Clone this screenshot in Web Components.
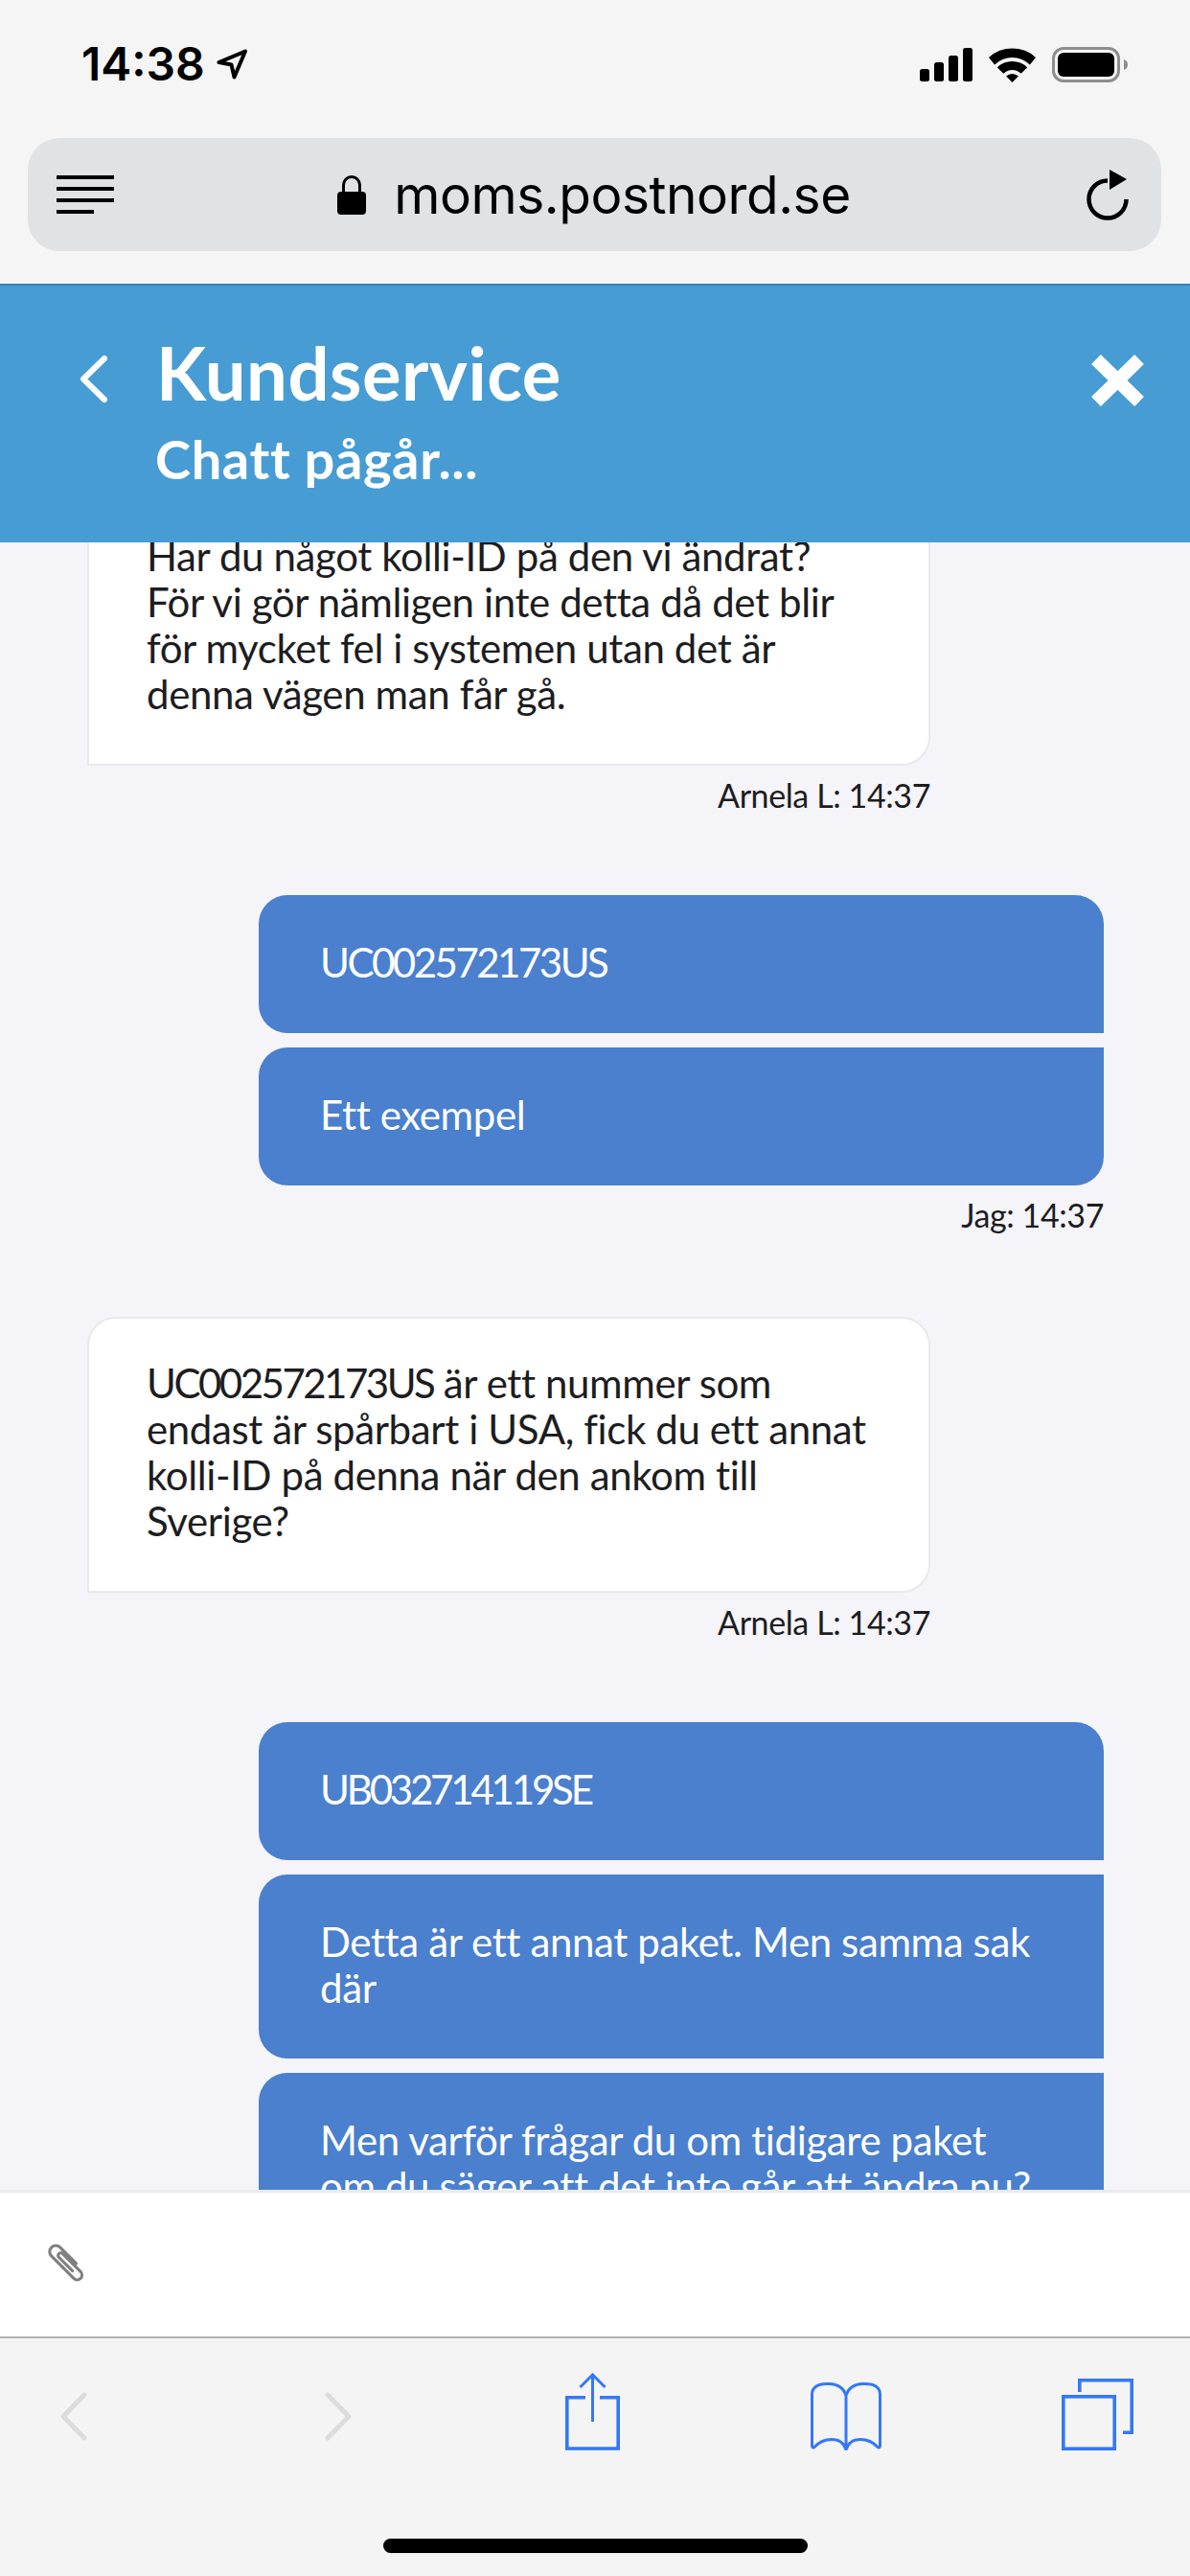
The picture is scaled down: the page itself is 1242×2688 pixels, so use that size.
<!DOCTYPE html>
<html lang="sv">
<head>
<meta charset="utf-8">
<title>Kundservice</title>
<style>
  html, body { margin: 0; padding: 0; }
  body {
    display: flex;
    flex-direction: column;
    width: 1242px;
    height: 2688px;
    overflow: hidden;
    background: #f4f4f9;
    font-family: Lato, "Open Sans", sans-serif;
  }
  .id { letter-spacing: -2.5px; }
  .id.narrow { letter-spacing: -3.2px; }
</style>
</head>
<body>
  <status-bar time="14:38"></status-bar>
  <url-bar host="moms.postnord.se"></url-bar>
  <chat-header title="Kundservice" status="Chatt pågår..."></chat-header>
  <chat-log>
    <chat-bubble from="agent" shift>Har du något kolli-ID på den vi ändrat? För vi gör nämligen inte detta då det blir för mycket fel i systemen utan det är denna vägen man får gå.</chat-bubble>
    <chat-time from="agent">Arnela L: 14:37</chat-time>
    <chat-bubble from="me" corner="first"><span class="id">UC002572173US</span></chat-bubble>
    <chat-bubble from="me" corner="last">Ett exempel</chat-bubble>
    <chat-time from="me">Jag: 14:37</chat-time>
    <chat-bubble from="agent"><span class="id">UC002572173US</span> är ett nummer som endast är spårbart i USA, fick du ett annat kolli-ID på denna när den ankom till Sverige?</chat-bubble>
    <chat-time from="agent">Arnela L: 14:37</chat-time>
    <chat-bubble from="me" corner="first"><span class="id narrow">UB032714119SE</span></chat-bubble>
    <chat-bubble from="me" corner="middle">Detta är ett annat paket. Men samma sak där</chat-bubble>
    <chat-bubble from="me" corner="last">Men varför frågar du om tidigare paket om du säger att det inte går att ändra nu?</chat-bubble>
  </chat-log>
  <chat-composer></chat-composer>
  <browser-toolbar></browser-toolbar>

<script>
class StatusBar extends HTMLElement {
  constructor() {
    super();
    this.shadow = this.attachShadow({ mode: 'open' });
  }

  connectedCallback() {
    this.shadow.innerHTML = `
      <style>
        :host {
          display: flex;
          flex: none;
          align-items: flex-start;
          justify-content: space-between;
          height: 144px;
          box-sizing: border-box;
          padding: 49px 65px 0 85px;
          background: #f5f5f5;
          color: #000;
        }
        .left { display: flex; align-items: center; gap: 12px; height: 36px; }
        .time { font: 600 48px/36px Inter, sans-serif; }
        .right { display: flex; align-items: center; height: 37px; }
        svg { display: block; }
        .signal { margin-right: 17px; }
        .wifi { margin-right: 17px; }
      </style>
      <div class="left">
        <span class="time">${this.getAttribute('time')}</span>
        <svg width="32" height="32" viewBox="0 0 32 32" fill="none" stroke="#000" stroke-width="4" stroke-linejoin="round">
          <path d="M2.5 14 L30 2.5 L18.5 29.5 L15.5 16.5 Z"/>
        </svg>
      </div>
      <div class="right">
        <svg class="signal" width="55" height="35" viewBox="0 0 55 35" fill="#000">
          <rect x="0" y="22" width="10" height="13" rx="2.5"/>
          <rect x="15" y="15" width="10" height="20" rx="2.5"/>
          <rect x="30" y="8" width="10" height="27" rx="2.5"/>
          <rect x="45" y="0" width="10" height="35" rx="2.5"/>
        </svg>
        <svg class="wifi" width="49" height="36" viewBox="0 0 49 36" fill="#000">
          <path d="M0 10 A36 36 0 0 1 49 10 L42.9 17.6 A26 26 0 0 0 6.1 17.6 Z"/>
          <path d="M8.9 20.4 A22 22 0 0 1 40.1 20.4 L33.7 26.8 A13 13 0 0 0 15.3 26.8 Z"/>
          <path d="M18.1 29.6 A9 9 0 0 1 30.9 29.6 L24.5 36 Z"/>
        </svg>
        <svg width="79" height="37" viewBox="0 0 79 37">
          <rect x="1.5" y="1.5" width="68" height="34" rx="10.5" fill="none" stroke="#8e8e8e" stroke-width="3"/>
          <rect x="6" y="6" width="59" height="25" rx="6" fill="#000"/>
          <path d="M75 13 C78 14 79 16 79 18.5 C79 21 78 23 75 24 Z" fill="#8e8e8e"/>
        </svg>
      </div>
    `;
  }
}

class UrlBar extends HTMLElement {
  constructor() {
    super();
    this.shadow = this.attachShadow({ mode: 'open' });
  }

  connectedCallback() {
    this.shadow.innerHTML = `
      <style>
        :host {
          display: block;
          flex: none;
          height: 152px;
          box-sizing: border-box;
          padding: 0 30px 0 29px;
          background: #f5f5f5;
        }
        .pill {
          display: flex;
          align-items: center;
          height: 118px;
          box-sizing: border-box;
          padding: 0 32px 0 30px;
          border-radius: 33px;
          background: #e1e2e4;
          color: #000;
        }
        .menu { display: block; }
        .site {
          flex: 1;
          display: flex;
          align-items: center;
          justify-content: center;
          gap: 29px;
          padding-right: 13px;
          font: 400 55px/60px Inter, sans-serif;
          letter-spacing: -0.45px;
        }
        svg { display: block; flex: none; }
      </style>
      <div class="pill">
        <svg class="menu" width="60" height="40" viewBox="0 0 60 40" fill="#000">
          <rect y="0" width="60" height="4"/>
          <rect y="12" width="60" height="4"/>
          <rect y="24" width="60" height="4"/>
          <rect y="36" width="39" height="4"/>
        </svg>
        <div class="site">
          <svg width="30" height="41" viewBox="0 0 30 41">
            <path d="M6.5 19 V10 A8.5 8.5 0 0 1 23.5 10 V19" fill="none" stroke="#000" stroke-width="3"/>
            <rect x="0" y="17" width="30" height="24" rx="4" fill="#000"/>
          </svg>
          <span>${this.getAttribute('host')}</span>
        </div>
        <svg width="46" height="54" viewBox="0 0 46 54">
          <path d="M22 12.5 A19.5 19.5 0 1 0 41.5 32" fill="none" stroke="#000" stroke-width="4.5"/>
          <path d="M24 1 L42 11 L24 22 Z" fill="#000"/>
        </svg>
      </div>
    `;
  }
}

class ChatHeader extends HTMLElement {
  constructor() {
    super();
    this.shadow = this.attachShadow({ mode: 'open' });
  }

  connectedCallback() {
    this.shadow.innerHTML = `
      <style>
        :host {
          display: flex;
          flex: none;
          align-items: flex-start;
          position: relative;
          z-index: 1;
          height: 270px;
          box-sizing: border-box;
          padding: 48px 48px 0 83px;
          border-top: 2px solid #3b7fae;
          background: #479cd4;
          color: #fff;
        }
        .back { display: block; flex: none; margin: 25px 53px 0 0; }
        .titles { flex: 1; font-family: Lato, sans-serif; font-weight: 700; }
        h1 { margin: 0 0 0 -2px; font: inherit; font-size: 76px; line-height: 86px; letter-spacing: 0.5px; }
        p { margin: 15px 0 0 -3px; font: inherit; font-size: 56px; line-height: 64px; letter-spacing: 0.6px; }
        .close { display: block; flex: none; margin-top: 24px; }
      </style>
      <svg class="back" width="29" height="49" viewBox="0 0 29 49" fill="none" stroke="#fff" stroke-width="6" stroke-linecap="round" stroke-linejoin="round">
        <path d="M26 3 L4 24.5 L26 46"/>
      </svg>
      <div class="titles">
        <h1>${this.getAttribute('title')}</h1>
        <p>${this.getAttribute('status')}</p>
      </div>
      <svg class="close" width="55" height="54" viewBox="0 0 55 54" fill="none" stroke="#fff" stroke-width="14">
        <path d="M5 5 L50 49 M50 5 L5 49"/>
      </svg>
    `;
  }
}

class ChatLog extends HTMLElement {
  constructor() {
    super();
    this.shadow = this.attachShadow({ mode: 'open' });
  }

  connectedCallback() {
    this.shadow.innerHTML = `
      <style>
        :host {
          display: block;
          flex: 1;
          min-height: 0;
          overflow: hidden;
          background: #f4f4f9;
        }
        .scroll {
          display: flex;
          flex-direction: column;
          padding: 0 90px 0 91px;
        }
      </style>
      <div class="scroll"><slot></slot></div>
    `;
  }
}

class ChatBubble extends HTMLElement {
  constructor() {
    super();
    this.shadow = this.attachShadow({ mode: 'open' });
  }

  connectedCallback() {
    const radius = 30;
    const corners = {
      first: `${radius}px ${radius}px 0 ${radius}px`,
      middle: `${radius}px 0 0 ${radius}px`,
      last: `${radius}px 0 ${radius}px ${radius}px`,
    };
    const mine = this.getAttribute('from') === 'me';
    this.shadow.innerHTML = `
      <style>
        :host {
          display: block;
          flex: none;
          box-sizing: border-box;
          width: ${mine ? 882 : 880}px;
          margin: ${this.hasAttribute('shift') ? '-55px 0 0' : '0'};
          align-self: ${mine ? 'flex-end' : 'flex-start'};
          padding: ${mine ? '46px 64px 50px' : '43px 60px 49px'};
          font: 400 42px/48px Lato, sans-serif;
          letter-spacing: -0.38px;
          ${mine
            ? `background: #4a80ce; color: #fff; border-radius: ${corners[this.getAttribute('corner')]};`
            : `background: #fff; color: #1d1d1f; border: 2px solid #e9e9ec; border-radius: ${radius}px ${radius}px ${radius}px 0;`}
        }
        :host([corner="first"]), :host([corner="middle"]) { margin-bottom: 15px; }
      </style>
      <slot></slot>
    `;
  }
}

class ChatTime extends HTMLElement {
  constructor() {
    super();
    this.shadow = this.attachShadow({ mode: 'open' });
  }

  connectedCallback() {
    const mine = this.getAttribute('from') === 'me';
    this.shadow.innerHTML = `
      <style>
        :host {
          display: block;
          flex: none;
          box-sizing: border-box;
          height: ${mine ? 137 : 135}px;
          width: ${mine ? 'auto' : '880px'};
          padding-top: 11px;
          text-align: right;
          font: 400 34px/40px Lato, sans-serif;
          letter-spacing: -0.4px;
          color: #1d1d1f;
        }
      </style>
      <slot></slot>
    `;
  }
}

class ChatComposer extends HTMLElement {
  constructor() {
    super();
    this.shadow = this.attachShadow({ mode: 'open' });
  }

  connectedCallback() {
    this.shadow.innerHTML = `
      <style>
        :host {
          display: flex;
          flex: none;
          align-items: center;
          position: relative;
          height: 155px;
          box-sizing: border-box;
          padding: 0 0 0 47px;
          border-top: 3px solid #ebebeb;
          border-bottom: 2px solid #b2b2b2;
          background: #fff;
        }
        svg { display: block; }
      </style>
      <svg width="49" height="51" viewBox="-2 -11 46 48" fill="none" stroke="#808080" stroke-width="3.4" stroke-linecap="round">
        <path transform="rotate(-45) scale(.86)" d="M14 33 V7 A7 7 0 0 0 0 7 V43 A5.5 5.5 0 0 0 11 43 V14 A3 3 0 0 0 5 14 V36"/>
      </svg>
    `;
  }
}

class BrowserToolbar extends HTMLElement {
  constructor() {
    super();
    this.shadow = this.attachShadow({ mode: 'open' });
  }

  connectedCallback() {
    this.shadow.innerHTML = `
      <style>
        :host {
          display: flex;
          flex: none;
          flex-direction: column;
          align-items: center;
          height: 248px;
          background: #f4f4f4;
        }
        .icons {
          display: flex;
          align-items: flex-start;
          align-self: stretch;
          height: 209px;
          box-sizing: border-box;
          padding: 36px 0 0 63px;
        }
        svg { display: block; flex: none; }
        .prev { margin: 20px 248px 0 0; }
        .next { margin: 20px 223px 0 0; }
        .share { margin: 0 199px 0 0; }
        .book { margin: 10px 188px 0 0; }
        .tabs { margin: 6px 0 0 0; }
        .home { width: 443px; height: 15px; border-radius: 8px; background: #000; }
      </style>
      <div class="icons">
        <svg class="prev" width="28" height="51" viewBox="0 0 28 51" fill="none" stroke="#dcdcdc" stroke-width="5" stroke-linecap="round" stroke-linejoin="round">
          <path d="M25 3 L3 25.5 L25 48"/>
        </svg>
        <svg class="next" width="28" height="51" viewBox="0 0 28 51" fill="none" stroke="#dcdcdc" stroke-width="5" stroke-linecap="round" stroke-linejoin="round">
          <path d="M3 3 L25 25.5 L3 48"/>
        </svg>
        <svg class="share" width="57" height="81" viewBox="0 0 57 81" fill="none" stroke="#3478f6" stroke-width="3.6">
          <path d="M21 25.8 H1.8 V79 H55.2 V25.8 H36"/>
          <path d="M28.5 1 V51" stroke-width="3"/>
          <path d="M15.5 15 L28.5 2 L41.5 15" stroke-width="3"/>
        </svg>
        <svg class="book" width="74" height="71" viewBox="0 0 74 71" fill="none" stroke="#3478f6" stroke-width="3">
          <path d="M37 70 V14 C35 6 28 1.5 20 1.5 H16 C7 1.5 1.5 6 1.5 12 V66 C1.5 68 3 68.5 4 67.5 C9 62 15 59.5 22 59.5 C30 59.5 35 64 37 70 C39 64 44 59.5 52 59.5 C59 59.5 65 62 70 67.5 C71 68.5 72.5 68 72.5 66 V12 C72.5 6 67 1.5 58 1.5 H54 C46 1.5 39 6 37 14"/>
        </svg>
        <svg class="tabs" width="75" height="75" viewBox="0 0 75 75" fill="none" stroke="#3478f6" stroke-width="3.6">
          <rect x="1.8" y="18.8" width="53.4" height="54.4"/>
          <path d="M18.8 14 V1.8 H73.2 V56.2 H64"/>
        </svg>
      </div>
      <div class="home"></div>
    `;
  }
}

customElements.define('status-bar', StatusBar);
customElements.define('url-bar', UrlBar);
customElements.define('chat-header', ChatHeader);
customElements.define('chat-log', ChatLog);
customElements.define('chat-bubble', ChatBubble);
customElements.define('chat-time', ChatTime);
customElements.define('chat-composer', ChatComposer);
customElements.define('browser-toolbar', BrowserToolbar);
</script>
</body>
</html>
